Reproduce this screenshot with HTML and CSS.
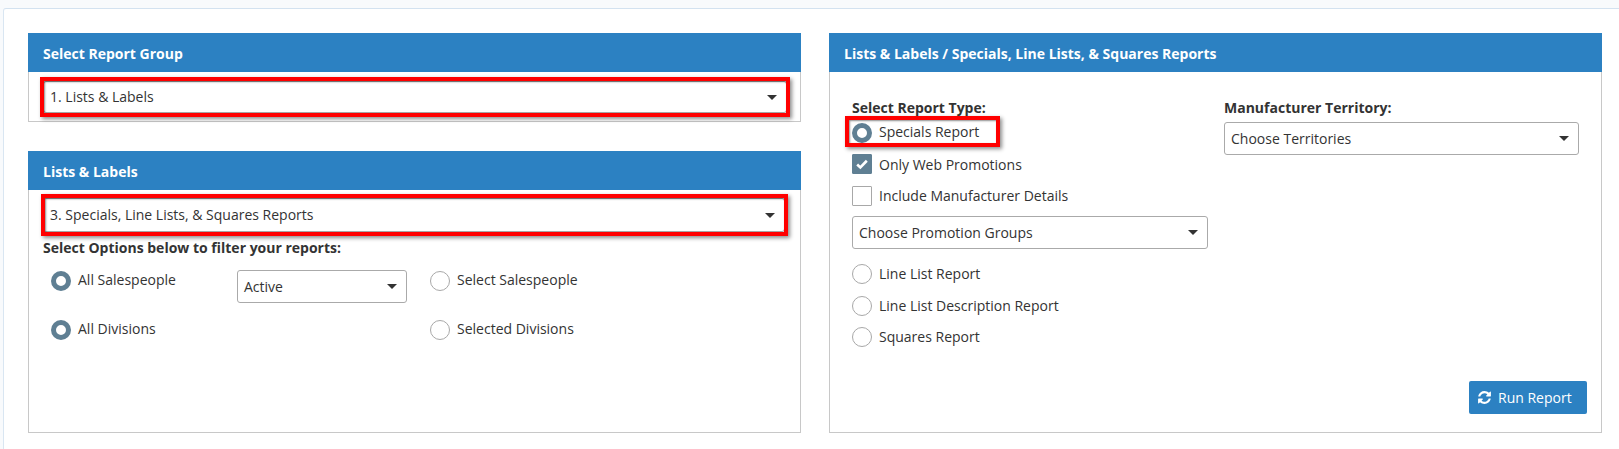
FILE: index.html
```html
<!DOCTYPE html>
<html lang="en">
  <head>
    <meta charset="UTF-8" />
    <title>Reports</title>
    <link rel="stylesheet" href="styles.css">
  </head>
  <body>
    <div class="card">
      <div class="column">
        <section class="panel">
          <h2 class="panel_head">Select Report Group</h2>
          <div class="panel_body group_body">
            <div class="select">
              <span>1. Lists &amp; Labels</span><i class="caret"></i>
              <b class="mark"></b>
            </div>
          </div>
        </section>
        <section class="panel panel_grow">
          <h2 class="panel_head">Lists &amp; Labels</h2>
          <div class="panel_body list_body">
            <div class="select select_tall">
              <span>3. Specials, Line Lists, &amp; Squares Reports</span><i class="caret"></i>
              <b class="mark mark_narrow"></b>
            </div>
            <p class="label filter_label">Select Options below to filter your reports:</p>
            <div class="filters">
              <label class="choice"><i class="radio radio_on"></i>All Salespeople</label>
              <div class="select select_small"><span>Active</span><i class="caret"></i></div>
              <label class="choice"><i class="radio"></i>Select Salespeople</label>
              <label class="choice"><i class="radio radio_on"></i>All Divisions</label>
              <span></span>
              <label class="choice"><i class="radio"></i>Selected Divisions</label>
            </div>
          </div>
        </section>
      </div>
      <section class="panel">
        <h2 class="panel_head">Lists &amp; Labels / Specials, Line Lists, &amp; Squares Reports</h2>
        <div class="panel_body report_body">
          <div class="report_cols">
            <div class="report_type">
              <p class="label">Select Report Type:</p>
              <label class="choice choice_first">
                <i class="radio radio_on"></i>Specials Report
                <b class="mark mark_choice"></b>
              </label>
              <label class="choice choice_low">
                <i class="check check_on">
                  <svg viewBox="0 0 16 16" width="14" height="14"><path d="M2.5 8.5l3.6 3.4 7.4-7.6" fill="none" stroke="#fff" stroke-width="3"/></svg>
                </i>Only Web Promotions
              </label>
              <label class="choice choice_tight"><i class="check"></i>Include Manufacturer Details</label>
              <div class="select select_promo"><span>Choose Promotion Groups</span><i class="caret"></i></div>
              <label class="choice"><i class="radio"></i>Line List Report</label>
              <label class="choice choice_tight"><i class="radio"></i>Line List Description Report</label>
              <label class="choice"><i class="radio"></i>Squares Report</label>
            </div>
            <div>
              <p class="label territory_label">Manufacturer Territory:</p>
              <div class="select select_small"><span>Choose Territories</span><i class="caret"></i></div>
            </div>
          </div>
          <button class="run">
            <svg viewBox="0 0 1792 1792" width="15" height="15"><path fill="#fff" d="M1639 1056q0 5-1 7-64 268-268 434.5t-478 166.5q-146 0-282.5-55t-243.5-157l-129 129q-19 19-45 19t-45-19-19-45v-448q0-26 19-45t45-19h448q26 0 45 19t19 45-19 45l-137 137q71 66 161 102t187 36q134 0 250-65t186-179q11-17 53-117 8-23 30-23h192q13 0 22.5 9.5t9.5 22.5zm25-800v448q0 26-19 45t-45 19h-448q-26 0-45-19t-19-45 19-45l138-138q-148-137-349-137-134 0-250 65t-186 179q-11 17-53 117-8 23-30 23h-199q-13 0-22.5-9.5t-9.5-22.5v-7q65-268 270-434.5t480-166.5q146 0 284 55.5t245 156.5l130-129q19-19 45-19t45 19 19 45z"/></svg>
            Run Report
          </button>
        </div>
      </section>
    </div>
  </body>
</html>
```

FILE: styles.css
```css
* {
  box-sizing: border-box;
  margin: 0;
  padding: 0;
}
html {
  background-color: #f8fafc;
}
body {
  color: #333;
  font-family: "Open Sans", "Noto Sans", sans-serif;
  font-size: 14px;
  line-height: 20px;
  overflow: hidden;
  padding: 8px 0 0 3px;
}
.card {
  background-color: #fff;
  border-left: 1px solid #d9e6f2;
  border-radius: 3px 0 0 0;
  border-top: 1px solid #d3e2f0;
  display: grid;
  gap: 28px;
  grid-template-columns: 773px 773px;
  height: 441px;
  padding: 24px 0 0 24px;
}
.column {
  display: flex;
  flex-direction: column;
  gap: 29px;
  height: 400px;
}
.panel {
  border: 1px solid #c8c8c8;
  border-top: none;
  display: flex;
  flex-direction: column;
  height: 400px;
}
.column .panel {
  height: 89px;
}
.column .panel_grow {
  flex: 1;
}
.panel_head {
  background-color: #2c81c2;
  color: #fff;
  font-size: 14px;
  font-weight: 700;
  height: 39px;
  line-height: 42px;
  margin: 0 -1px;
  padding-left: 15px;
}
.panel_body {
  flex: 1;
}
.group_body {
  padding: 9px 13px 0 14px;
}
.list_body {
  padding: 8px 15px 0 14px;
}
.report_body {
  display: flex;
  flex-direction: column;
  padding: 26px 14px 18px 22px;
}
.report_cols {
  display: grid;
  flex: 1;
  gap: 16px;
  grid-template-columns: 356px 355px;
}
.label {
  font-weight: 700;
}
.filter_label {
  margin-top: 6px;
}
.territory_label {
  margin: 0 0 4px;
}
.select {
  align-items: center;
  background-color: #fff;
  border: 1px solid #aaa;
  border-radius: 3px;
  display: flex;
  height: 32px;
  justify-content: space-between;
  padding: 0 9px 0 6px;
  position: relative;
}
.select_tall {
  height: 34px;
}
.select_small {
  height: 33px;
}
.select_promo {
  height: 33px;
  margin: 10px 0 15px;
}
.caret {
  border-left: 5px solid transparent;
  border-right: 5px solid transparent;
  border-top: 5px solid #333;
  height: 0;
  width: 0;
}
.mark {
  border: 4px solid #f00;
  box-shadow: 2px 2px 4px rgba(0, 0, 0, 0.45), inset 1px 1px 2px rgba(0, 0, 0, 0.45);
  inset: -5px -4px;
  pointer-events: none;
  position: absolute;
}
.mark_narrow {
  left: -3px;
}
.mark_choice {
  inset: -7px auto -4px -7px;
  width: 155px;
}
.filters {
  align-items: start;
  display: grid;
  grid-template-columns: 186px 193px 1fr;
  grid-template-rows: 49px 20px;
  margin: 12px 0 0 8px;
}
.filters .select {
  width: 170px;
}
.choice {
  align-items: flex-start;
  display: flex;
  gap: 7px;
  position: relative;
}
.filters .choice {
  line-height: 18px;
  margin-top: 1px;
}
.report_type .choice {
  margin-top: 11px;
}
.report_type .choice_first {
  line-height: 18px;
  margin-top: 5px;
}
.report_type .choice_low {
  height: 20px;
  line-height: 22px;
}
.report_type .choice_tight {
  margin-top: 12px;
}
.report_type .select_promo + .choice {
  margin-top: 0;
}
.radio,
.check {
  background-color: #fff;
  border: 1px solid #a8a8a8;
  display: block;
  flex: none;
  height: 20px;
  width: 20px;
}
.radio {
  border-radius: 50%;
}
.radio_on {
  border: 5px solid #5f7f93;
}
.check {
  border-radius: 1px;
}
.check_on {
  align-items: center;
  background-color: #5f7f93;
  border-color: #5f7f93;
  display: flex;
  justify-content: center;
}
.run {
  align-items: center;
  align-self: flex-end;
  background-color: #2c81c2;
  border: none;
  border-radius: 2px;
  color: #fff;
  display: flex;
  font-family: inherit;
  font-size: 14px;
  gap: 6px;
  height: 33px;
  padding: 0 15px 0 8px;
  width: 118px;
}
```
